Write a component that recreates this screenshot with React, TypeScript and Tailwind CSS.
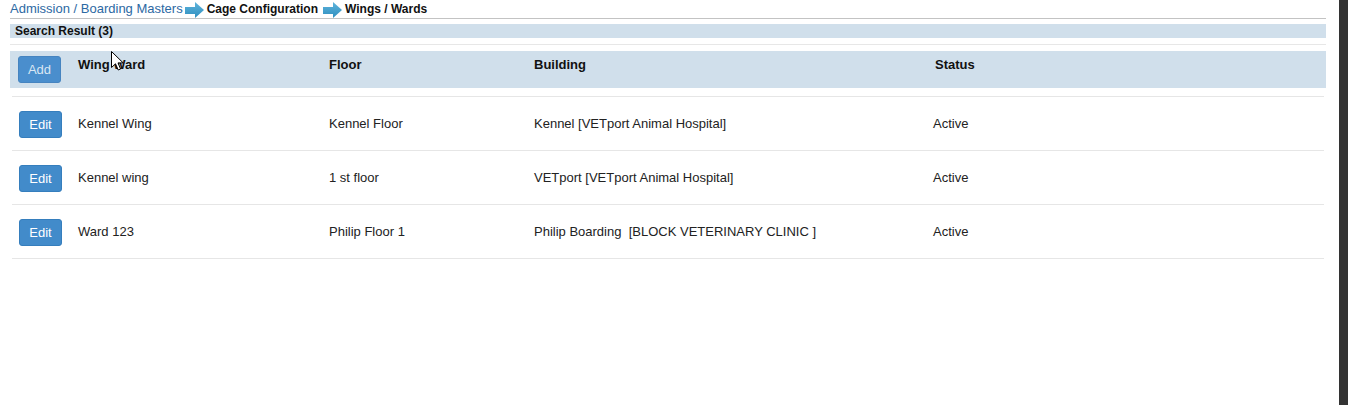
const font = { fontFamily: '"Liberation Sans", Arial, sans-serif' };

const rows = [
  { wing: 'Kennel Wing', floor: 'Kennel Floor', building: 'Kennel [VETport Animal Hospital]', status: 'Active' },
  { wing: 'Kennel wing', floor: '1 st floor', building: 'VETport [VETport Animal Hospital]', status: 'Active' },
  { wing: 'Ward 123', floor: 'Philip Floor 1', building: 'Philip Boarding\u00a0 [BLOCK VETERINARY CLINIC ]', status: 'Active' },
];

const Arrow = () => (
  <svg width="19" height="16" viewBox="0 0 19 16" className="shrink-0">
    <defs>
      <linearGradient id="arw" x1="0" y1="0" x2="0" y2="1">
        <stop offset="0" stopColor="#5fb4dc" />
        <stop offset="1" stopColor="#2f8fbf" />
      </linearGradient>
    </defs>
    <path d="M0 5 H10 V0 L19 8 L10 16 V12 H0 Z" fill="url(#arw)" />
  </svg>
);

const Cursor = () => (
  <svg width="13" height="20" viewBox="0 0 13 20" className="absolute left-[111px] top-[51px]">
    <path d="M0.5 0.5 V16.5 L4.5 12.8 L7.2 19 L9.6 18 L7 11.9 H12.2 Z" fill="#fff" stroke="#000" strokeWidth="1" strokeLinejoin="round" />
  </svg>
);

export default function App() {
  return (
    <div style={font} className="relative flex min-h-[405px] bg-white text-[13px]">
      <div className="flex-1 pl-[10px] pr-[13px]">
        {/* breadcrumb */}
        <div className="flex h-[19px] items-start border-b border-[#c3c3c3] leading-[18px]">
          <span className="text-[#2d69a3]">Admission / Boarding Masters</span>
          <span className="ml-[2px] mt-[2px]"><Arrow /></span>
          <span className="ml-[3px] text-[12px] font-bold text-[#111]">Cage Configuration</span>
          <span className="ml-[5px] mt-[2px]"><Arrow /></span>
          <span className="ml-[3px] text-[12px] font-bold text-[#111]">Wings / Wards</span>
        </div>

        <div className="mt-[5px] h-[14px] bg-[#d0dfeb] pl-[5px] text-[12px] font-bold leading-[14px] text-[#111]">
          Search Result (3)
        </div>
        <div className="mt-[6px] h-px bg-[#e7e7e7]" />

        {/* header */}
        <div className="mt-[6px] flex h-[37px] items-start bg-[#d0dfeb] font-bold leading-[15px] text-[#111]">
          <div className="w-[68px] pl-[8px] pt-[5px]">
            <button className="h-[27px] w-[43px] rounded-[3px] border border-[#4684c0] bg-[#4a8ecd] text-[13px] font-normal text-[#d9e6f3]">
              Add
            </button>
          </div>
          <div className="w-[251px] pt-[6px]">Wing Ward</div>
          <div className="w-[205px] pt-[6px]">Floor</div>
          <div className="w-[399px] pt-[6px]">Building</div>
          <div className="flex-1 pl-[2px] pt-[6px]">Status</div>
        </div>

        {/* rows */}
        <div className="mx-[2px] mt-[8px] border-t border-[#e6e6e6] text-[#222]">
          {rows.map((r) => (
            <div key={r.wing} className="flex h-[54px] items-center border-b border-[#e6e6e6] leading-[15px]">
              <div className="w-[66px] pl-[7px] pt-[2px]">
                <button className="h-[27px] w-[43px] rounded-[3px] border border-[#357ebd] bg-[#428bca] text-[13px] text-white">
                  Edit
                </button>
              </div>
              <div className="w-[251px]">{r.wing}</div>
              <div className="w-[205px]">{r.floor}</div>
              <div className="w-[399px] whitespace-pre">{r.building}</div>
              <div className="flex-1">{r.status}</div>
            </div>
          ))}
        </div>
      </div>
      <div className="w-[9px] shrink-0 bg-[#333333]" />
      <Cursor />
    </div>
  );
}
